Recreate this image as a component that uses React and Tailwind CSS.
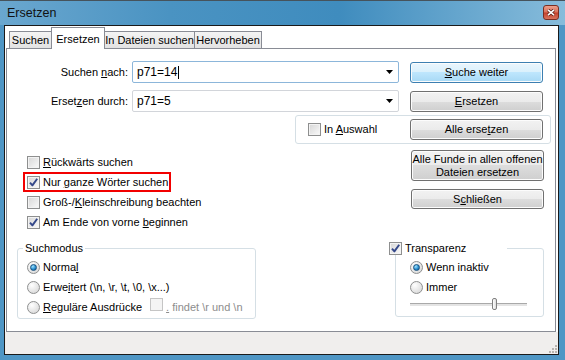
import React from "react";

function Check({ checked, disabled }) {
    return (
        <span className={`inline-flex w-[13px] h-[13px] shrink-0 items-center justify-center border ${disabled ? 'border-[#c5c5c5] bg-[#f4f4f4]' : 'border-[#8e8f8f] bg-[linear-gradient(135deg,#d6d6d6,#fafafa)] shadow-[inset_0_0_0_1px_#f3f3f3]'}`}>
            {checked && (
                <svg width="11" height="11" viewBox="0 0 11 11">
                    <path d="M2 5.6 L4.4 8.4 L9.2 1.8" fill="none" stroke="#34488a" strokeWidth="1.9" strokeLinejoin="round" />
                </svg>
            )}
        </span>
    )
}

function Radio({ checked }) {
    return (
        <span className="inline-flex w-[13px] h-[13px] shrink-0 items-center justify-center rounded-full border border-[#8e8f8f] bg-[radial-gradient(circle_at_35%_30%,#ffffff,#d2d2d2)]">
            {checked && <span className="w-[7px] h-[7px] rounded-full border border-[#17507e] bg-[radial-gradient(circle_at_35%_30%,#9fe3ff,#2a8fd0_55%,#0b4f86)]" />}
        </span>
    )
}

function Btn({ children, def, className }) {
    return (
        <div className={`flex items-center justify-center w-[133px] rounded-[3px] border text-center leading-[13px] shadow-[inset_0_0_0_1px_#fcfcfc] ${def ? 'border-[#3c7fb1] bg-[linear-gradient(#eaf6fd_0%,#d9f0fc_50%,#bee6fd_50%,#a7d9f5_100%)]' : 'border-[#707070] bg-[linear-gradient(#f2f2f2_0%,#ebebeb_50%,#dddddd_50%,#cfcfcf_100%)]'} ${className}`}>
            <span>{children}</span>
        </div>
    )
}

function Combo({ value, focus, caret }) {
    return (
        <div className={`flex items-center ml-[4px] w-[267px] h-[22px] rounded-[2px] border bg-white pl-[4px] pr-[5px] ${focus ? 'border-[#8cb6da]' : 'border-[#d2d5da]'}`}>
            <span className="text-[12px]">{value}</span>
            {caret && <span className="w-px h-[13px] bg-black ml-[1px]" />}
            <svg className="ml-auto" width="7" height="4" viewBox="0 0 7 4"><path d="M0 0 H7 L3.5 4 Z" fill="#000" /></svg>
        </div>
    )
}

export default function App() {
    return (
        <div className="w-[565px] h-[360px] flex flex-col bg-[#4f96c5] border-t border-[#46535c] font-['Liberation_Sans',Arial,sans-serif] text-[11px] text-black overflow-hidden">
            <div className="h-[24px] flex items-center pl-[7px] pr-[6px] bg-[linear-gradient(90deg,#6aa7cf_0%,#4a93c2_30%,#3f8cbe_60%,#87bcdb_100%)]">
                <span className="text-[12.5px] text-[#111]">Ersetzen</span>
                <div className="ml-auto mt-[-2px] w-[16px] h-[15px] flex items-center justify-center rounded-[3px] border border-[#7a2e22] bg-[linear-gradient(#eca08c_0%,#d9705a_48%,#c2402b_52%,#d8735d_100%)]">
                    <svg width="8" height="7" viewBox="0 0 8 7">
                        <path d="M1 0.8 L7 6.2 M7 0.8 L1 6.2" stroke="#5a1a10" strokeWidth="3" />
                        <path d="M1 0.8 L7 6.2 M7 0.8 L1 6.2" stroke="#fff" strokeWidth="1.6" />
                    </svg>
                </div>
            </div>

            <div className="flex-1 flex flex-col ml-[4px] mr-[6px] mb-[5px] border border-[#1a1a1a] bg-white">
                {/* tabs */}
                <div className="flex items-end h-[22px] pl-[4px]">
                    <div className="flex items-center justify-center w-[43px] h-[17px] border-t border-l border-r border-[#898c95] bg-[linear-gradient(#f4f4f4,#e2e2e2)] pt-[1px]">Suchen</div>
                    <div className="relative z-10 -ml-px -mb-px flex items-start justify-center w-[54px] h-[22px] border-t border-l border-r border-[#898c95] bg-white pt-[3px]">Ersetzen</div>
                    <div className="-ml-px flex items-center justify-center w-[91px] h-[17px] border-t border-l border-r border-[#898c95] bg-[linear-gradient(#f4f4f4,#e2e2e2)] pt-[1px]">In Dateien suchen</div>
                    <div className="-ml-px flex items-center justify-center w-[68px] h-[17px] border-t border-l border-r border-[#898c95] bg-[linear-gradient(#f4f4f4,#e2e2e2)] pt-[1px]">Hervorheben</div>
                </div>

                {/* panel */}
                <div className="flex-1 flex flex-col ml-px mr-[2px] border border-[#898c95] pt-[12px]">
                    <div className="flex items-center h-[22px]">
                        <div className="w-[121px] text-right">Suchen <u>n</u>ach:</div>
                        <Combo value="p71=14" focus caret />
                        <Btn def className="ml-[11px] h-[21px]"><u>S</u>uche weiter</Btn>
                    </div>
                    <div className="flex items-center h-[22px] mt-[7px]">
                        <div className="w-[121px] text-right">Erset<u>z</u>en durch:</div>
                        <Combo value="p71=5" />
                        <Btn className="ml-[11px] h-[21px]"><u>E</u>rsetzen</Btn>
                    </div>

                    <div className="flex items-center ml-[288px] mt-[3px] w-[256px] h-[29px] rounded-[3px] border border-[#d5dfe5] pl-[12px] pr-[7px]">
                        <Check />
                        <span className="ml-[3px]">In <u>A</u>uswahl</span>
                        <Btn className="ml-auto h-[21px]">Alle erse<u>t</u>zen</Btn>
                    </div>

                    <div className="flex items-start mt-[6px]">
                        <div className="flex flex-col pl-[20px] pt-[2px]">
                            <div className="flex items-center h-[20px]"><Check /><span className="ml-[3px]"><u>R</u>ückwärts suchen</span></div>
                            <div className="flex items-center h-[20px] -ml-[4px] pl-[2px] pr-px border-2 border-[#f20000] w-fit">
                                <Check checked /><span className="ml-[3px]">Nur <u>g</u>anze Wörter suchen</span>
                            </div>
                            <div className="flex items-center h-[20px]"><Check /><span className="ml-[3px]">Groß-/<u>K</u>leinschreibung beachten</span></div>
                            <div className="flex items-center h-[20px]"><Check checked /><span className="ml-[3px]">Am Ende von vorne <u>b</u>eginnen</span></div>
                        </div>
                        <div className="flex flex-col ml-auto mr-[11px]">
                            <Btn className="h-[31px]">Alle Funde in allen offenen<br />Dateien ersetzen</Btn>
                            <Btn className="h-[20px] mt-[8px]">S<u>c</u>hließen</Btn>
                        </div>
                    </div>

                    <div className="flex items-start mt-[9px]">
                        <fieldset className="ml-[10px] w-[239px] rounded-[3px] border border-[#d5dfe5] pl-[9px] pt-[2px] pb-[1px]">
                            <legend className="-ml-[4px] px-[2px] leading-[14px]">Suchmodus</legend>
                            <div className="flex items-center h-[20px]"><Radio checked /><span className="ml-[3px]">Norma<u>l</u></span></div>
                            <div className="flex items-center h-[20px]"><Radio /><span className="ml-[3px]">Erwe<u>i</u>tert (\n, \r, \t, \0, \x...)</span></div>
                            <div className="flex items-center h-[20px]">
                                <Radio /><span className="ml-[3px]"><u>R</u>eguläre Ausdrücke</span>
                                <span className="ml-[8px]"><Check disabled /></span>
                                <span className="ml-[3px] text-[#8d8d8d]"><u>.</u> findet \r und \n</span>
                            </div>
                        </fieldset>

                        <fieldset className="ml-[139px] w-[149px] rounded-[3px] border border-[#d5dfe5] pl-[14px] pt-[2px] pb-[5px]">
                            <legend className="-ml-[21px] w-[118px] bg-white leading-[14px]">
                                <span className="flex items-center"><Check checked /><span className="ml-[3px]">Transparenz</span></span>
                            </legend>
                            <div className="flex items-center h-[20px]"><Radio checked /><span className="ml-[3px]">Wenn inaktiv</span></div>
                            <div className="flex items-center h-[20px]"><Radio /><span className="ml-[3px]">Immer</span></div>
                            <div className="relative flex items-center h-[14px] w-[117px]">
                                <div className="w-full h-[3px] border-t border-[#a9a9a9] bg-[#e4e4e4]" />
                                <div className="absolute left-[82px] top-[1px] w-[5px] h-[12px] rounded-[2px] border border-[#7f7f7f] bg-[linear-gradient(90deg,#fff,#dcdcdc)]" />
                            </div>
                        </fieldset>
                    </div>
                </div>

                {/* status */}
                <div className="h-[22px] flex items-end justify-end bg-[#f0eeed] pr-[1px] pb-[1px]">
                    <svg width="9" height="9" viewBox="0 0 9 9">
                        <g fill="#b8b4b0">
                            <rect x="7" y="1" width="2" height="2" />
                            <rect x="4" y="4" width="2" height="2" /><rect x="7" y="4" width="2" height="2" />
                            <rect x="1" y="7" width="2" height="2" /><rect x="4" y="7" width="2" height="2" /><rect x="7" y="7" width="2" height="2" />
                        </g>
                    </svg>
                </div>
            </div>
        </div>
    )
}
